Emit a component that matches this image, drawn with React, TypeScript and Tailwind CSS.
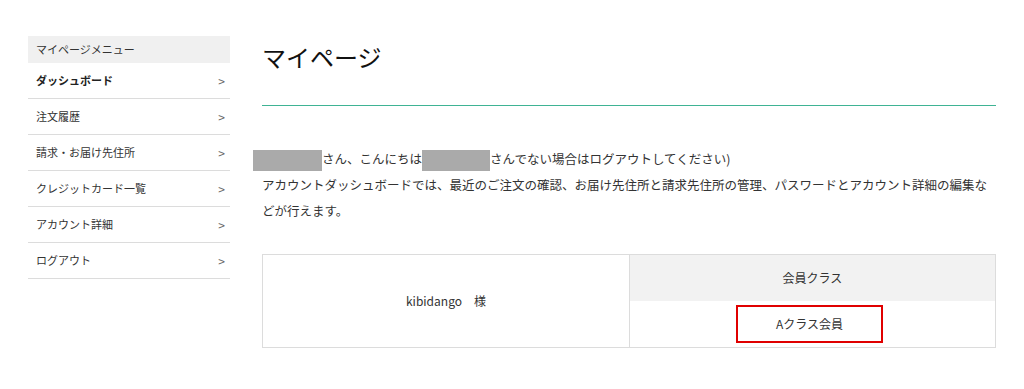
const menu = [
  { label: 'ダッシュボード', active: true },
  { label: '注文履歴' },
  { label: '請求・お届け先住所' },
  { label: 'クレジットカード一覧' },
  { label: 'アカウント詳細' },
  { label: 'ログアウト' },
];

const font = 'font-["Noto_Sans_CJK_JP","Noto_Sans",sans-serif]';

export default function App() {
  return (
    <div className={`min-h-[389px] bg-white text-[#333] ${font} flex pl-[28px] pr-[28px] pt-[36px]`}>
      <aside className="w-[202px] shrink-0">
        <div className="h-[27px] bg-[#f0f0f0] px-2 flex items-center text-[11px] text-[#333]">
          マイページメニュー
        </div>
        <ul>
          {menu.map((item) => (
            <li
              key={item.label}
              className="h-[36px] border-b border-[#dcdcdc] flex items-center justify-between pl-2 pr-[5px] text-[11px]"
            >
              <span className={item.active ? 'font-bold text-[#222]' : 'text-[#333]'}>{item.label}</span>
              <span className="text-[#666] text-[12px]">&gt;</span>
            </li>
          ))}
        </ul>
      </aside>

      <main className="ml-[32px] w-[734px]">
        <h1 className="text-[24px] leading-[36px] mt-[3px] text-[#111]">マイページ</h1>
        <div className="mt-[30px] h-px bg-[#3fb394]" />

        <div className="mt-[40px] text-[12.5px] leading-[26px] text-[#333]">
          <p>
            <span className="inline-block -ml-[9px] w-[69px] h-[21px] bg-[#aaa] align-middle" />
            さん、こんにちは
            <span className="inline-block w-[68px] h-[21px] bg-[#aaa] align-middle" />
            さんでない場合はログアウトしてください)
          </p>
          <p>
            アカウントダッシュボードでは、最近のご注文の確認、お届け先住所と請求先住所の管理、パスワードとアカウント詳細の編集などが行えます。
          </p>
        </div>

        <div className="mt-[30px] border border-[#dcdcdc] grid grid-cols-2 text-[12px] text-[#333]">
          <div className="flex items-center justify-center">kibidango　様</div>
          <div className="border-l border-[#dcdcdc]">
            <div className="h-[46px] bg-[#f2f2f2] flex items-center justify-center">会員クラス</div>
            <div className="h-[46px] flex items-center justify-center">
              <div className="mr-[6px] w-[147px] h-[38px] border-2 border-[#e00000] flex items-center justify-center">
                Aクラス会員
              </div>
            </div>
          </div>
        </div>
      </main>
    </div>
  );
}
